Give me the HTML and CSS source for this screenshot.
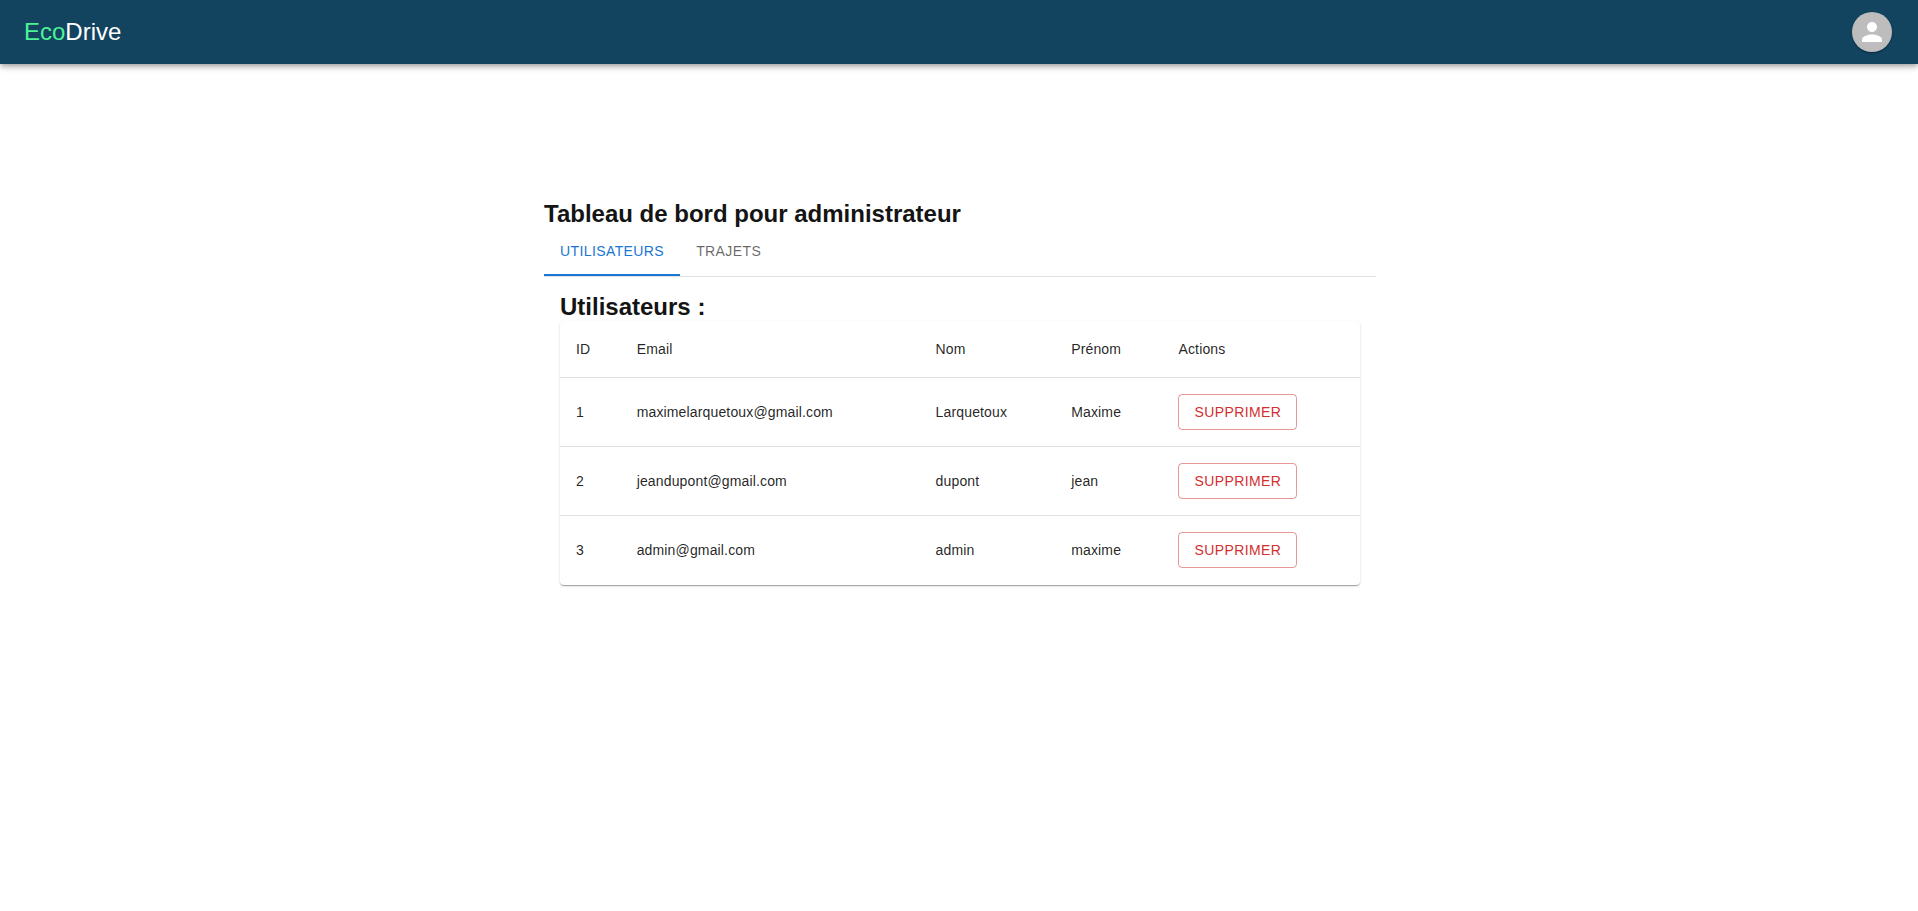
FILE: index.html
```html
<!DOCTYPE html>
<html lang="fr">
<head>
  <meta charset="utf-8">
  <meta name="viewport" content="width=device-width, initial-scale=1">
  <title>EcoDrive</title>
  <link rel="stylesheet" href="styles.css">
</head>
<body>
  <header class="app-bar">
    <a class="brand" href="#"><span class="brand-eco">Eco</span>Drive</a>
    <button class="avatar" type="button" aria-label="Compte">
      <svg class="avatar-icon" viewBox="0 0 24 24" aria-hidden="true">
        <path d="M12 12c2.21 0 4-1.79 4-4s-1.79-4-4-4-4 1.79-4 4 1.79 4 4 4zm0 2c-2.67 0-8 1.34-8 4v2h16v-2c0-2.66-5.33-4-8-4z"/>
      </svg>
    </button>
  </header>

  <main class="page">
    <div class="dashboard">
      <h1 class="heading">Tableau de bord pour administrateur</h1>
      <div class="tabs" role="tablist">
        <button class="tab tab-selected" type="button" role="tab" id="tab-users" aria-selected="true" aria-controls="panel-users">Utilisateurs</button>
        <button class="tab" type="button" role="tab" aria-selected="false">Trajets</button>
      </div>
      <section class="panel" role="tabpanel" id="panel-users" aria-labelledby="tab-users">
        <h2 class="heading">Utilisateurs :</h2>
        <div class="paper">
          <table class="table">
            <thead>
              <tr>
                <th scope="col">ID</th>
                <th scope="col">Email</th>
                <th scope="col">Nom</th>
                <th scope="col">Prénom</th>
                <th scope="col">Actions</th>
              </tr>
            </thead>
            <tbody>
              <tr>
                <td>1</td>
                <td>maximelarquetoux@gmail.com</td>
                <td>Larquetoux</td>
                <td>Maxime</td>
                <td><button class="delete" type="button">Supprimer</button></td>
              </tr>
              <tr>
                <td>2</td>
                <td>jeandupont@gmail.com</td>
                <td>dupont</td>
                <td>jean</td>
                <td><button class="delete" type="button">Supprimer</button></td>
              </tr>
              <tr>
                <td>3</td>
                <td>admin@gmail.com</td>
                <td>admin</td>
                <td>maxime</td>
                <td><button class="delete" type="button">Supprimer</button></td>
              </tr>
            </tbody>
          </table>
        </div>
      </section>
    </div>
  </main>
</body>
</html>
```

FILE: styles.css
```css
*,
*::before,
*::after {
  box-sizing: border-box;
}

body {
  margin: 0;
  background: #fff;
  color: rgba(0, 0, 0, 0.87);
  font-family: "Liberation Sans", Arial, sans-serif;
  font-size: 14px;
  line-height: 24px;
}

button {
  font: inherit;
  cursor: pointer;
}

.app-bar {
  display: flex;
  align-items: center;
  justify-content: space-between;
  min-height: 64px;
  padding: 0 26px 0 24px;
  background: #12435f;
  box-shadow:
    0 2px 4px -1px rgba(0, 0, 0, 0.2),
    0 4px 5px 0 rgba(0, 0, 0, 0.14),
    0 1px 10px 0 rgba(0, 0, 0, 0.12);
}

.brand {
  color: #fff;
  font-size: 24px;
  line-height: 32px;
  text-decoration: none;
}

.brand-eco {
  color: #4df296;
}

.avatar {
  display: flex;
  align-items: center;
  justify-content: center;
  width: 40px;
  height: 40px;
  padding: 0;
  border: 0;
  border-radius: 50%;
  background: #bdbdbd;
  color: #fff;
  box-shadow:
    0 2px 1px -1px rgba(0, 0, 0, 0.2),
    0 1px 1px 0 rgba(0, 0, 0, 0.14),
    0 1px 3px 0 rgba(0, 0, 0, 0.12);
}

.avatar-icon {
  width: 30px;
  height: 30px;
  fill: currentColor;
}

.page {
  padding: 136px 0 0 2px;
}

.dashboard {
  max-width: 832px;
  margin: 0 auto;
}

.heading {
  margin: 0;
  color: #141414;
  font-size: 24px;
  font-weight: 700;
  line-height: 28px;
}

.tabs {
  display: flex;
  border-bottom: 1px solid #e0e0e0;
}

.tab {
  min-height: 48px;
  padding: 0 16px 2px;
  border: 0;
  background: none;
  color: rgba(0, 0, 0, 0.6);
  letter-spacing: 0.02857em;
  text-transform: uppercase;
}

.tab-selected {
  color: #1976d2;
  box-shadow: inset 0 -2px #1976d2;
}

.panel {
  padding: 16px;
}

.paper {
  border-radius: 4px;
  background: #fff;
  box-shadow:
    0 2px 1px -1px rgba(0, 0, 0, 0.2),
    0 1px 1px 0 rgba(0, 0, 0, 0.14),
    0 1px 3px 0 rgba(0, 0, 0, 0.12);
}

.table {
  width: 100%;
  border-collapse: separate;
  border-spacing: 0;
}

.table th,
.table td {
  padding: 16px;
  border-bottom: 1px solid #e0e0e0;
  font-weight: 400;
  letter-spacing: 0.01071em;
  text-align: left;
}

.table tbody tr:last-child td {
  border-bottom-color: transparent;
}

.delete {
  display: block;
  padding: 5px 15px;
  border: 1px solid rgba(211, 47, 47, 0.5);
  border-radius: 4px;
  background: none;
  color: #d32f2f;
  letter-spacing: 0.02857em;
  text-transform: uppercase;
}
```
